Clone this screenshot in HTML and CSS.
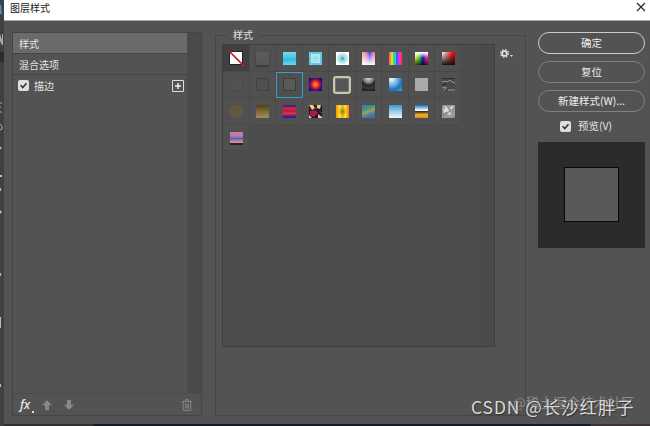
FILE: index.html
```
<!DOCTYPE html>
<html lang="zh-CN">
<head>
  <meta charset="UTF-8">
  <meta name="viewport" content="width=device-width, initial-scale=1.0">
  <title>图层样式</title>
  <link rel="stylesheet" href="styles.css">
</head>
<body>
  <!-- Edge of the toolbar behind the dialog -->
  <div class="toolbar-edge">
    <svg width="4" height="426" viewBox="0 0 4 426">
      <rect width="4" height="25" fill="#3c4248"/>
      <path d="M0 5h1l1 9H0z" fill="#5c8fb5"/>
      <path d="M0 34l2 6v-6h1v11H2L0 41z" fill="#aaa"/>
      <rect y="52" width="4" height="10" fill="#2c2c2c"/>
      <path d="M0 103h2M0 107h1M0 112h2M0 124l2 2v3l-2 1" stroke="#aaa" fill="none"/>
      <path d="M0 147h2l-2 3zM0 175h2v2H0zM0 188h1v3H0zM0 210l2 2-2 2zM0 273h1v3H0zM0 317h1v11H0zM0 384h1v3H0z" fill="#bbb"/>
    </svg>
  </div>

  <div class="dialog">
    <div class="titlebar">
      <span>图层样式</span>
      <svg width="10" height="10" viewBox="0 0 10 10"><path d="M1 1l8 8M9 1L1 9" stroke="#222" stroke-width="1.1"/></svg>
    </div>

    <div class="content">
      <!-- Effects list -->
      <div class="effects">
        <div class="effects-body">
          <div class="effects-list">
            <div class="effect selected">样式</div>
            <div class="effect">混合选项</div>
            <div class="effect stroke">
              <span class="check"><svg width="11" height="11" viewBox="0 0 11 11"><path d="M2.6 5.2l2.2 2.4 3.7-4.4" fill="none" stroke="#333" stroke-width="1.6"/></svg></span>
              <span class="stroke-name">描边</span>
              <svg class="add" width="12" height="12" viewBox="0 0 12 12"><path d="M.5.5h11v11H.5z" fill="none" stroke="#ddd"/><path d="M6 3v6M3 6h6" stroke="#eee" stroke-width="1.5"/></svg>
            </div>
          </div>
          <div class="scrollbar"></div>
        </div>
        <div class="effects-footer">
          <span class="fx">fx<i></i></span>
          <svg class="up" width="10" height="10" viewBox="0 0 10 10"><path d="M5 0l5 5.3H7V10H3V5.3H0z" fill="#888"/></svg>
          <svg class="down" width="10" height="10" viewBox="0 0 10 10"><path d="M5 10l5-5.3H7V0H3v4.7H0z" fill="#888"/></svg>
          <svg class="trash" width="10" height="12" viewBox="0 0 10 12"><path d="M0 2.5h10M3.5 2V.7h3V2M1.3 3v8.3h7.4V3M3.6 4.5v5M5 4.5v5M6.4 4.5v5" fill="none" stroke="#858585"/></svg>
        </div>
      </div>

      <!-- Style presets -->
      <fieldset class="styles">
        <legend>样式</legend>
        <div class="presets">
          <div class="grid">
            <div class="cell none"><svg width="18" height="18" viewBox="0 0 18 18"><path d="M2.5 2.5h13v13h-13z" fill="#fff" stroke="#222"/><path d="M1 1l16 16" stroke="#c4161c" stroke-width="1.7"/></svg></div>
            <div class="cell"><span class="swatch bevel"></span></div>
            <div class="cell"><span class="swatch aqua"></span></div>
            <div class="cell"><span class="swatch ice"></span></div>
            <div class="cell"><span class="swatch snow"></span></div>
            <div class="cell"><span class="swatch pastel"></span></div>
            <div class="cell"><span class="swatch stripes"></span></div>
            <div class="cell"><span class="swatch spectrum"></span></div>
            <div class="cell"><span class="swatch red"></span></div>

            <div class="cell"><span class="swatch soft"></span></div>
            <div class="cell"><span class="swatch outline"></span></div>
            <div class="cell active"><span class="swatch stroked"></span></div>
            <div class="cell"><span class="swatch sun"></span></div>
            <div class="cell"><span class="swatch frame"></span></div>
            <div class="cell"><span class="swatch black"></span></div>
            <div class="cell"><span class="swatch blue"></span></div>
            <div class="cell"><span class="swatch gray"></span></div>
            <div class="cell"><svg width="13" height="13" viewBox="0 0 13 13"><path d="M0 0h13v13H0z" fill="#484848"/><path d="M0 .5h13M0 6.5h5" stroke="#2d2d2d"/><path d="M0 4l3-1 2 1 3-2 2 2 3 1M0 10l4-1M1 12.5l4-3M6 12h7" fill="none" stroke="#999"/></svg></div>

            <div class="cell"><span class="swatch moss"></span></div>
            <div class="cell"><span class="swatch brown"></span></div>
            <div class="cell"><span class="swatch crimson"></span></div>
            <div class="cell"><svg width="13" height="13" viewBox="0 0 13 13"><path d="M0 0h13v13H0z" fill="#2a1428"/><path d="M0 0h4l2 3-3 2zM8 0h4l-1 4-3-1z" fill="#e3d77c"/><path d="M1 6l5-1 3 3-4 4-4-1z" fill="#a51d3f"/><path d="M5 1l3 1-1 4zM9 6l4 1v2z" fill="#5b2387"/><path d="M9 9l4 3v1H9zM0 10l3 3H0z" fill="#dfc9b5"/></svg></div>
            <div class="cell"><span class="swatch gold"></span></div>
            <div class="cell"><span class="swatch rainbow"></span></div>
            <div class="cell"><span class="swatch sky"></span></div>
            <div class="cell"><span class="swatch chrome"></span></div>
            <div class="cell"><svg width="13" height="13" viewBox="0 0 13 13"><path d="M0 0h13v13H0z" fill="#999"/><path d="M1 1l4 1 2 4-5 2zM8 2l4-1-3 6zM5 9l3-2 4 5z" fill="#ddd"/><path d="M0 0l3 4M12 3l-4 3M1 11l4-4M8 9l5 4" stroke="#777"/></svg></div>

            <div class="cell"><span class="swatch dusk"></span></div>
          </div>
          <div class="scrollbar"></div>
        </div>
        <svg class="gear" width="13" height="10" viewBox="0 0 13 10"><circle cx="4.5" cy="4.5" r="2.4" fill="none" stroke="#ddd" stroke-width="1.8"/><circle cx="4.5" cy="4.5" r="3.8" fill="none" stroke="#ddd" stroke-width="1.4" stroke-dasharray="1.5 1.484"/><path d="M10 6h3l-1.5 2z" fill="#ddd"/></svg>
      </fieldset>

      <!-- Actions and preview -->
      <div class="actions">
        <button class="primary">确定</button>
        <button>复位</button>
        <button>新建样式(W)...</button>
        <label class="preview-toggle">
          <span class="check"><svg width="11" height="11" viewBox="0 0 11 11"><path d="M2.6 5.2l2.2 2.4 3.7-4.4" fill="none" stroke="#333" stroke-width="1.6"/></svg></span>
          预览(V)
        </label>
        <div class="preview"><div class="preview-box"></div></div>
      </div>
    </div>
  </div>

  <div class="bottom-edge"></div>
  <div class="watermark community">@稀土掘金技术社区</div>
  <div class="watermark author">CSDN @长沙红胖子</div>
</body>
</html>
```
FILE: styles.css
```
* {
  box-sizing: border-box;
}

body {
  margin: 0;
  width: 650px;
  height: 426px;
  overflow: hidden;
  display: grid;
  grid-template-columns: 4px 646px;
  grid-template-rows: 424px 2px;
  background: #404040;
  color: #e4e4e4;
  font: 11px/14px "Noto Sans CJK SC", sans-serif;
}

svg {
  display: block;
  flex: none;
}

.toolbar-edge {
  grid-row: 1 / 3;
}

.dialog {
  background: #535353;
}

.bottom-edge {
  background: linear-gradient(90deg, #303030 89px, #171a27 90px, #171a27 586px, #3b3538 587px);
}

/* Title bar */
.titlebar {
  display: flex;
  justify-content: space-between;
  height: 21px;
  padding: 1px 4px 0 6px;
  background: #fff;
  border-bottom: 1px solid #a9aeac;
  color: #222;
  font-size: 10px;
}

.titlebar svg {
  margin-top: 1px;
}

.content {
  display: flex;
  align-items: flex-start;
  padding: 11px 5px 0 8px;
}

/* Effects list */
.effects {
  width: 190px;
  height: 384px;
  border: 1px solid #454545;
}

.effects-body {
  display: flex;
  height: 361px;
  border-bottom: 1px solid #4b4b4b;
}

.effects-list {
  flex: 1;
}

.scrollbar {
  width: 14px;
  background: #4a4a4a;
}

.effect {
  display: flex;
  align-items: center;
  height: 21px;
  padding: 1px 0 0 6px;
  border-bottom: 1px solid #444;
  font-size: 10px;
}

.effect.selected {
  background: #6a6a6a;
}

.effect.stroke {
  border: 0;
  padding: 0 3px 0 5px;
}

.stroke-name {
  margin-left: 5px;
}

.add {
  margin-left: auto;
}

.check {
  display: block;
  width: 11px;
  height: 11px;
  border-radius: 2px;
  background: #dedede;
}

.effects-footer {
  display: flex;
  align-items: center;
  height: 21px;
  padding: 0 9px 0 7px;
}

.fx {
  position: relative;
  width: 15px;
  font: italic 600 12px/14px "Open Sans", sans-serif;
}

.fx i {
  position: absolute;
  right: 1px;
  bottom: -1px;
  width: 2px;
  height: 2px;
  background: #ddd;
}

.up {
  margin-left: 7px;
}

.down {
  margin-left: 12px;
}

.trash {
  margin-left: auto;
}

/* Style presets */
.styles {
  display: flex;
  width: 311px;
  height: 389px;
  margin: -5px 0 0 13px;
  padding: 1px 0 0 6px;
  border: 1px solid #474747;
  min-width: 0;
}

.styles legend {
  margin-left: 5px;
  padding: 0 6px;
  height: 16px;
  font-size: 10px;
  line-height: 16px;
}

.presets {
  display: flex;
  justify-content: space-between;
  width: 273px;
  height: 303px;
  border: 1px solid #3e3e3e;
  background: #4d4d4d;
}

.grid {
  display: grid;
  grid-template-columns: repeat(9, 26.5px);
  grid-auto-rows: 26.6px;
  align-content: start;
}

.cell {
  display: flex;
  align-items: center;
  justify-content: center;
  background: #505050;
  border-right: 1px solid #494949;
  border-bottom: 1px solid #494949;
  padding: 1px 0 0 1px;
}

.cell.none {
  background: #404040;
}

.cell.active {
  border: 1px solid #3a9cc8;
  padding: 0;
}

.swatch {
  width: 13px;
  height: 13px;
}

.bevel { background: linear-gradient(#5c5c5c, #555); box-shadow: 0 2px 2px #383838; }
.aqua { background: linear-gradient(#78d9f2, #48c4e6 45%, #2cb9df 55%, #70d7ef); }
.ice { border: 2px solid #62c9e6; background: radial-gradient(#8bdcee, #c4eef7); }
.snow { background: radial-gradient(#3a9fb3 5%, #9fdbe5 25%, #bfe9ef 50%, #fff 70%); }
.pastel { background: linear-gradient(transparent, #fff), linear-gradient(90deg, #fbb95e, #e26ed2 35%, #3443d8 60%, #e96ed4 85%, #f66); }
.stripes { background: linear-gradient(90deg, #f64 5%, #ee3 25%, #3d4 35%, #2cf 50%, #35f 58%, #e3e 78%, #f35 95%); }
.spectrum { background: linear-gradient(#fff 5%, transparent 45%, #000b), linear-gradient(90deg, #fd3, #3c3 35%, #11c 60%, #d2a 85%, #e33); }
.red { background: linear-gradient(transparent, #111), linear-gradient(90deg, #fff, #f00 85%); }
.soft { border: 1px solid #4b4b4b; background: #535353; }
.outline { border: 1px solid #414141; background: #505050; }
.stroked { border: 1px solid #3c3c3c; background: #585a56; }
.sun { background: radial-gradient(#ff9a3c, #f02b20 35%, #850b65 55%, #120a80 80%); }
.frame { width: 18px; height: 18px; border: 2px solid #c9c8aa; border-radius: 3px; box-shadow: inset 0 0 1px 1px #777; background: #555; }
.black { background: radial-gradient(circle at 50% 0, #ddd, #777 35%, #222 50%, #3a3a3a 70%, #111); }
.blue { background: radial-gradient(circle at 20% 10%, #f4faff, #78b9e8 35%, #1d76be 65%, #3b99d8); }
.gray { background: #aaa; }
.moss { border-radius: 5px; background: #625840; }
.brown { background: linear-gradient(#55400f, #7b6638 45%, #a0905f); }
.crimson { background: linear-gradient(#41218a 8%, #dc2443 25%, #b0203d 48%, #e3344a 65%, #381c85 90%); }
.gold { background: radial-gradient(ellipse at 50% 50%, #a8770c, transparent 45%), linear-gradient(90deg, #f1960a, #ffe52c 30%, #d9b01b 50%, #ffe52c 70%, #ef7b07); }
.rainbow { background: linear-gradient(160deg, #4d6bb2, #399987 30%, #a0a04d 50%, #397cb3 75%, #7950a2); }
.sky { background: linear-gradient(#3d95cb, #9bcde8 50%, #f0f7fa); }
.chrome { background: linear-gradient(#1c68bf, #8dd0f2 25%, #fff 42%, #4a3108 50%, #8b5e0d 60%, #f3b43d 75%, #d48c17); }
.dusk { background: linear-gradient(#d27a97, #b07fae 30%, #5d63bd 50%, #b87d9f 68%, #dc9194 82%, #292229 88%); }

.gear {
  margin: 5px 0 0 5px;
}

/* Actions and preview */
.actions {
  display: flex;
  flex-direction: column;
  width: 107px;
  margin-left: 12px;
}

button {
  height: 22px;
  margin: 0 0 7px;
  padding: 0;
  border: 1px solid #808080;
  border-radius: 11px;
  background: transparent;
  color: #eee;
  font: 10.5px/18px "Noto Sans CJK SC", sans-serif;
}

button.primary {
  border-color: #ccc;
}

.preview-toggle {
  display: flex;
  align-items: center;
  gap: 7px;
  height: 14px;
  margin: 0 0 9px 22px;
  font-size: 10.5px;
}

.preview {
  display: flex;
  justify-content: center;
  height: 106px;
  padding-top: 25px;
  background: #2b2b2b;
}

.preview-box {
  width: 55px;
  height: 55px;
  border: 1px solid #080808;
  background: #595959;
}

/* Watermarks */
.watermark {
  position: absolute;
  white-space: nowrap;
}

.community {
  left: 513px;
  top: 392px;
  color: #8c8c8c;
  font-size: 13.6px;
  line-height: 20px;
}

.author {
  left: 471px;
  top: 394px;
  color: #d8d8d8;
  font-size: 17.5px;
  line-height: 26px;
  letter-spacing: 0.9px;
  text-shadow: 1px 1px 1px #333;
}
```
